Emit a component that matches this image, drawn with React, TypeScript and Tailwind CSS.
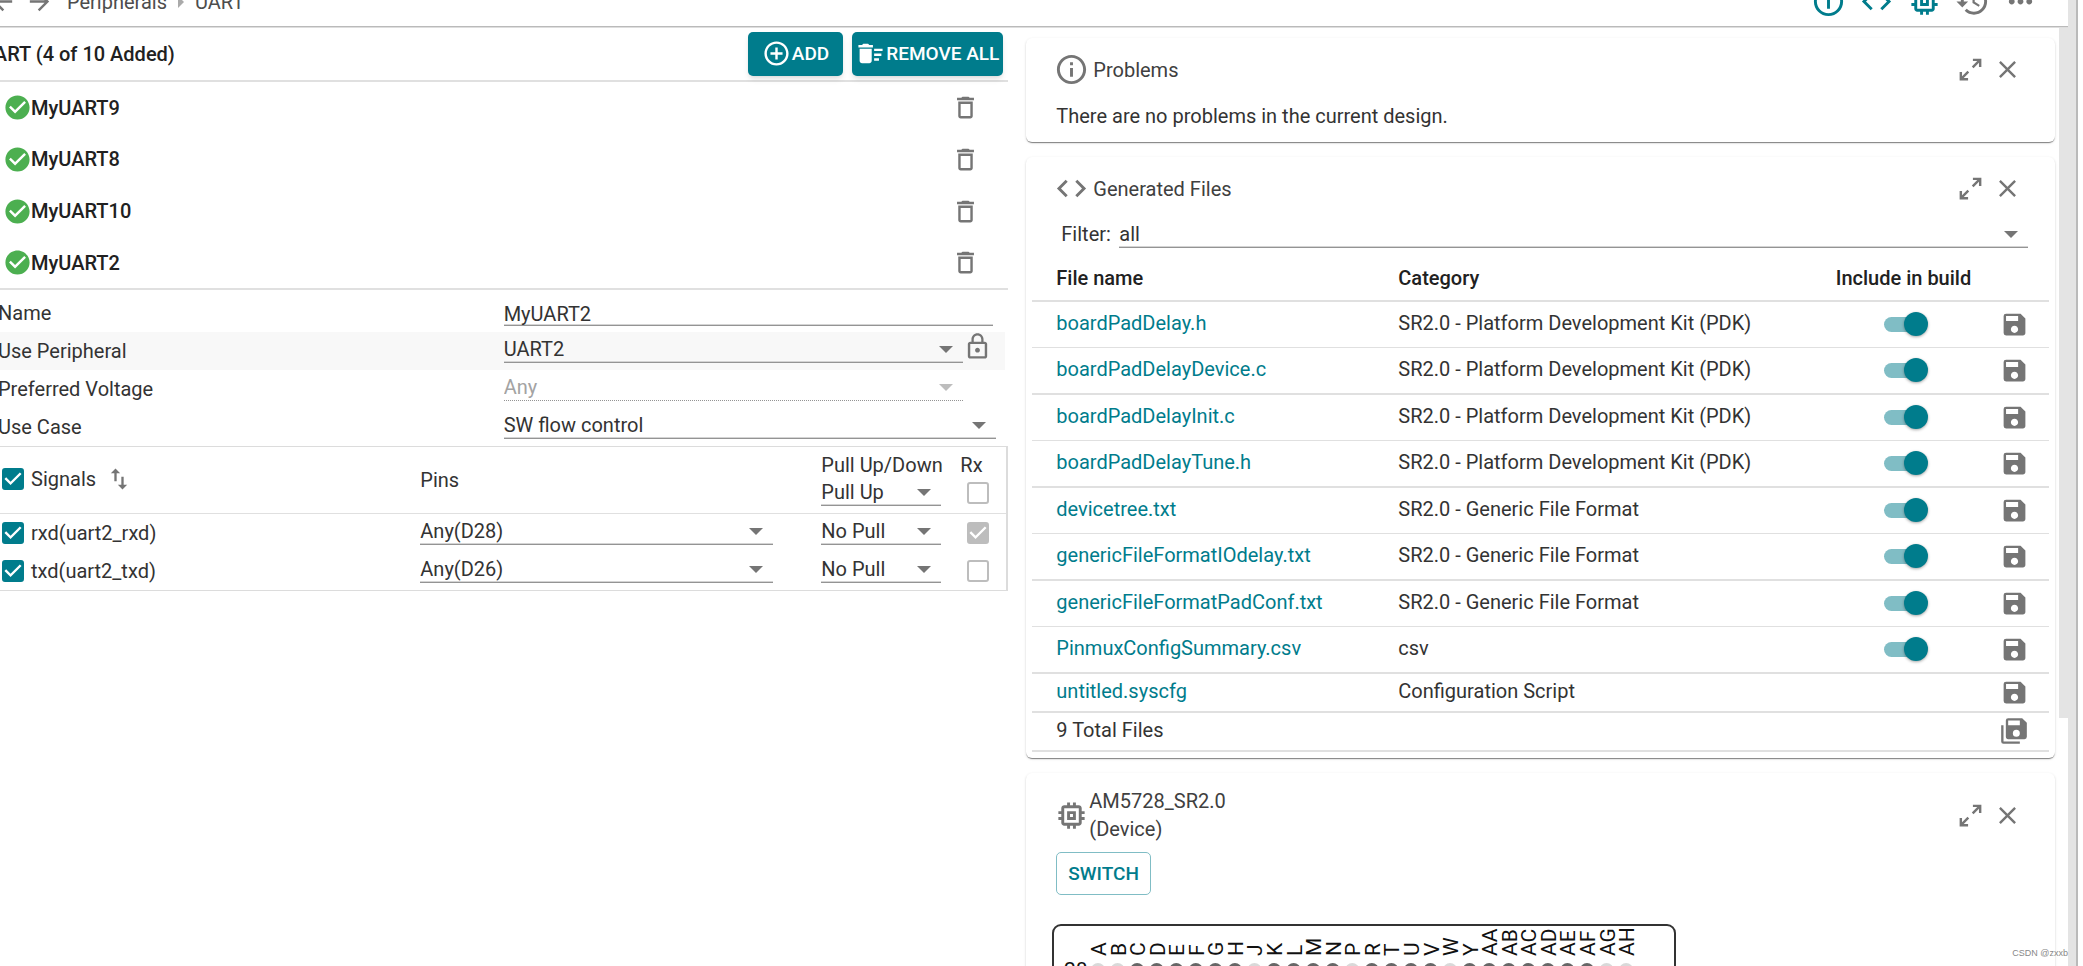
import { useState } from 'react';
import type { ReactNode } from 'react';
import {
    MdAddCircleOutline, MdArrowBack, MdArrowForward, MdCheckCircle, MdClose, MdCode, MdDeleteOutline,
    MdDeleteSweep, MdHistory, MdImportExport, MdInfoOutline, MdLockOutline, MdMemory, MdMoreHoriz, MdSave,
} from 'react-icons/md';

type GeneratedFile = { name: string; category: string; toggle: boolean };
type Signal = { name: string; pin: string; pull: string; rx: boolean };

const instances = ['MyUART9', 'MyUART8', 'MyUART10', 'MyUART2'];

const signals: Signal[] = [
    { name: 'rxd(uart2_rxd)', pin: 'Any(D28)', pull: 'No Pull', rx: true },
    { name: 'txd(uart2_txd)', pin: 'Any(D26)', pull: 'No Pull', rx: false },
];

const PDK = 'SR2.0 - Platform Development Kit (PDK)';
const GENERIC = 'SR2.0 - Generic File Format';

const files: GeneratedFile[] = [
    { name: 'boardPadDelay.h', category: PDK, toggle: true },
    { name: 'boardPadDelayDevice.c', category: PDK, toggle: true },
    { name: 'boardPadDelayInit.c', category: PDK, toggle: true },
    { name: 'boardPadDelayTune.h', category: PDK, toggle: true },
    { name: 'devicetree.txt', category: GENERIC, toggle: true },
    { name: 'genericFileFormatIOdelay.txt', category: GENERIC, toggle: true },
    { name: 'genericFileFormatPadConf.txt', category: GENERIC, toggle: true },
    { name: 'PinmuxConfigSummary.csv', category: 'csv', toggle: true },
    { name: 'untitled.syscfg', category: 'Configuration Script', toggle: false },
];

const ballColumns = [
    'A', 'B', 'C', 'D', 'E', 'F', 'G', 'H', 'J', 'K', 'L', 'M', 'N', 'P', 'R', 'T', 'U', 'V', 'W', 'Y',
    'AA', 'AB', 'AC', 'AD', 'AE', 'AF', 'AG', 'AH',
];
const powerBalls = ['A', 'B', 'J', 'P', 'W', 'AG', 'AH'];

export default function App() {
    return (
        <div className="flex h-screen overflow-hidden bg-white font-[Roboto,'Liberation_Sans',sans-serif] text-xl leading-7 text-[#333]">
            <div className="flex min-w-0 flex-1 flex-col">
                <TopBar />
                <div className="flex min-h-0 flex-1">
                    <main className="w-[49%] shrink-0 overflow-hidden pr-[5px]">
                        <InstanceList />
                        <InstanceForm />
                        <SignalTable />
                    </main>
                    <aside className="flex min-w-0 flex-1 flex-col gap-[15px] overflow-hidden pt-[11px] pr-1 pl-[13px]">
                        <Card icon={<MdInfoOutline size={35} />} title="Problems">
                            <p className="px-[30px] pt-[15px] pb-3">There are no problems in the current design.</p>
                        </Card>
                        <GeneratedFiles />
                        <DeviceCard />
                    </aside>
                    <div className="w-[9px] shrink-0">
                        <div className="h-[691px] bg-[#e4e4e4]" />
                    </div>
                </div>
            </div>
            <div className="mr-[5px] w-[10px] shrink-0 border-r-2 border-[#bababa] bg-[#e4e4e4]" />
            <span className="absolute right-[15px] bottom-[5px] font-['Liberation_Sans',sans-serif] text-[9px] leading-4 text-[#888]">CSDN @zxxb</span>
        </div>
    );
}

function TopBar() {
    return (
        <header className="z-10 -mt-[23px] flex h-[50px] shrink-0 items-center border-b border-[#bababa] pr-6 text-[#757575] shadow-[0_1px_0_#dedede]">
            <button type="button" aria-label="Back" className="-ml-3"><MdArrowBack size={29} /></button>
            <button type="button" aria-label="Forward" className="ml-2"><MdArrowForward size={29} /></button>
            <nav className="ml-[13px] flex flex-1 items-center text-[#4d4d4d]">
                <a href="#peripherals">Peripherals</a>
                <svg width="6" height="12" viewBox="0 0 6 12" className="mx-[11px] fill-[#aaa]"><path d="M0 0l6 6-6 6z" /></svg>
                <a href="#uart">UART</a>
            </nav>
            <BarButton label="Problems" active><MdInfoOutline size={35} /></BarButton>
            <BarButton label="Generated files" active><MdCode size={35} /></BarButton>
            <BarButton label="Device" active><MdMemory size={35} /></BarButton>
            <BarButton label="History"><MdHistory size={35} /></BarButton>
            <BarButton label="More"><MdMoreHoriz size={35} /></BarButton>
        </header>
    );
}

function BarButton({ label, active, children }: { label: string; active?: boolean; children: ReactNode }) {
    return (
        <button type="button" aria-label={label} className={'flex w-12 justify-center ' + (active ? 'text-[#007c8c]' : 'text-[#757575]')}>
            {children}
        </button>
    );
}

function InstanceList() {
    return (
        <section className="text-[#212121]">
            <div className="flex h-[55px] items-center justify-end gap-[9px] border-b-2 border-[#e0e0e0] pr-[5px]">
                <h1 className="-ml-[19px] flex-1 font-medium">UART (4 of 10 Added)</h1>
                <button type="button" className="flex h-11 items-center rounded-[5px] bg-[#007c8c] px-[14px] text-[19px] font-medium text-white shadow-md">
                    <MdAddCircleOutline size={29} className="mr-px" />ADD
                </button>
                <button type="button" className="flex h-11 items-center rounded-[5px] bg-[#007c8c] px-1 text-[19px] font-medium text-white shadow-md">
                    <MdDeleteSweep size={29} className="mr-px" />REMOVE ALL
                </button>
            </div>
            <ul className="border-b-2 border-[#e0e0e0]">
                {instances.map((name) => (
                    <li key={name} className="flex h-[52px] items-center pr-7 pl-[3px] font-medium first:h-[51px] last:h-[51px]">
                        <MdCheckCircle size={29} className="-mr-px text-[#4caf50]" />
                        <span className="flex-1">{name}</span>
                        <button type="button" aria-label={'Delete ' + name} className="text-[#757575]"><MdDeleteOutline size={29} /></button>
                    </li>
                ))}
            </ul>
        </section>
    );
}

function InstanceForm() {
    const [name, setName] = useState('MyUART2');

    return (
        <form className="pt-1">
            <FormRow id="name" label="Name">
                <input id="name" value={name} onChange={(e) => setName(e.target.value)}
                    className="mr-[15px] h-[28px] min-w-0 flex-1 border-b border-[#949494] pt-1 shadow-[inset_0_-1px_0_#d4d4d4] outline-none" />
            </FormRow>
            <FormRow id="peripheral" label="Use Peripheral" shaded>
                <Select id="peripheral" options={['UART2', 'Any']} className="flex-1" />
                <button type="button" aria-label="Lock" className="-mt-1 mr-4 h-[29px] text-[#757575]"><MdLockOutline size={29} /></button>
            </FormRow>
            <FormRow id="voltage" label="Preferred Voltage">
                <Select id="voltage" options={['Any']} className="mr-[45px] flex-1" disabled />
            </FormRow>
            <FormRow id="usecase" label="Use Case">
                <Select id="usecase" options={['SW flow control']} className="mr-3 flex-1" />
            </FormRow>
        </form>
    );
}

function FormRow({ id, label, shaded, children }: { id: string; label: string; shaded?: boolean; children: ReactNode }) {
    return (
        <div className={'mr-[3px] flex h-[38px] items-center ' + (shaded ? 'bg-[#f8f8f8]' : '')}>
            <label htmlFor={id} className="-ml-0.5 w-1/2 shrink-0">{label}</label>
            <div className="mt-1 -mr-[3px] ml-[3px] flex min-w-0 flex-1 self-start">{children}</div>
        </div>
    );
}

function Select({ id, label, options, disabled, className = '' }: { id?: string; label?: string; options: string[]; disabled?: boolean; className?: string }) {
    return (
        <div className={'relative min-w-0 ' + className}>
            <select id={id} aria-label={label} disabled={disabled}
                className="block h-[27px] w-full appearance-none border-b border-[#949494] pr-8 leading-[26px] shadow-[inset_0_-1px_0_#d4d4d4] outline-none disabled:border-dotted disabled:text-[#a3a3a3] disabled:opacity-100 disabled:shadow-none">
                {options.map((o) => <option key={o}>{o}</option>)}
            </select>
            <svg width="14" height="7" viewBox="0 0 14 7" className={'pointer-events-none absolute top-[10px] right-[10px] ' + (disabled ? 'fill-[#bdbdbd]' : 'fill-[#757575]')}>
                <path d="M0 0h14L7 7z" />
            </svg>
        </div>
    );
}

function Checkbox({ label, checked = false, muted }: { label: string; checked?: boolean; muted?: boolean }) {
    return (
        <span className="inline-grid align-middle">
            <input type="checkbox" aria-label={label} defaultChecked={checked}
                className={'peer size-[22px] appearance-none rounded-[3px] border-2 border-[#bdbdbd] [grid-area:1/1] '
                    + (muted ? 'checked:bg-[#bdbdbd]' : 'checked:border-[#007c8c] checked:bg-[#007c8c]')} />
            <svg viewBox="3 3 18 18" className="pointer-events-none invisible size-[22px] fill-white [grid-area:1/1] peer-checked:visible">
                <path d="M10 17l-5-5 1.41-1.41L10 14.17l7.59-7.59L19 8z" />
            </svg>
        </span>
    );
}

function SignalTable() {
    return (
        <table className="w-full table-fixed border-separate border-spacing-0 border-t border-r-2 border-[#dcdcdc] text-left">
            <colgroup>
                <col />
                <col className="w-[401px]" />
                <col className="w-[139px]" />
                <col className="w-[46px]" />
            </colgroup>
            <thead>
                <tr>
                    <th className="h-[67px] border-b border-[#e0e0e0] p-0 pb-0.5 pl-0.5 font-normal">
                        <div className="flex items-center">
                            <Checkbox label="All signals" checked />
                            <span className="ml-[7px]">Signals</span>
                            <button type="button" aria-label="Sort" className="ml-[9px] text-[#757575]"><MdImportExport size={28} /></button>
                        </div>
                    </th>
                    <th className="border-b border-[#e0e0e0] p-0 font-normal">Pins</th>
                    <th className="border-b border-[#e0e0e0] p-0 align-top font-normal">
                        <div className="pt-1">Pull Up/Down</div>
                        <Select label="Pull all" options={['Pull Up', 'No Pull']} className="w-[120px]" />
                    </th>
                    <th className="border-b border-[#e0e0e0] p-0 align-top font-normal">
                        <div className="pt-1">Rx</div>
                        <div className="mt-[3px] flex pl-[7px]"><Checkbox label="Rx all" muted /></div>
                    </th>
                </tr>
            </thead>
            <tbody>
                {signals.map((s) => (
                    <tr key={s.name} className="*:h-[38px] last:*:h-[39px] last:*:border-b last:*:border-[#dcdcdc]">
                        <td className="p-0 pb-px pl-0.5">
                            <div className="flex items-center"><Checkbox label={s.name} checked /><span className="ml-[7px]">{s.name}</span></div>
                        </td>
                        <td className="p-0 pb-[3px]"><Select label={'Pin for ' + s.name} options={[s.pin]} className="mr-12" /></td>
                        <td className="p-0 pb-[3px]"><Select label={'Pull for ' + s.name} options={[s.pull]} className="w-[120px]" /></td>
                        <td className="p-0 pb-px pl-[7px]"><div className="flex"><Checkbox label={'Rx for ' + s.name} checked={s.rx} muted /></div></td>
                    </tr>
                ))}
            </tbody>
        </table>
    );
}

function Card({ icon, title, children }: { icon: ReactNode; title: ReactNode; children: ReactNode }) {
    return (
        <section className="shrink-0 rounded-md bg-white shadow-[0_2px_1px_-1px_rgba(0,0,0,0.3),0_1px_1px_rgba(0,0,0,0.2),0_1px_3px_rgba(0,0,0,0.12)]">
            <div className="flex items-center pt-[14px] pr-[33px] pl-7 text-[#757575]">
                {icon}
                <h2 className="ml-1 flex-1 text-[#404040]">{title}</h2>
                <button type="button" aria-label="Expand" className="mr-2">
                    <svg width="29" height="29" viewBox="0 0 24 24" fill="currentColor">
                        <path d="M10 21v-2H6.41l4.5-4.5-1.41-1.41-4.5 4.5V14H3v7h7zM14.5 10.91l4.5-4.5V10h2V3h-7v2h3.59l-4.5 4.5 1.41 1.41z" />
                    </svg>
                </button>
                <button type="button" aria-label="Close"><MdClose size={29} /></button>
            </div>
            {children}
        </section>
    );
}

function GeneratedFiles() {
    return (
        <Card icon={<MdCode size={35} />} title="Generated Files">
            <div className="mt-[14px] flex items-center pr-[27px] pl-[35px]">
                <label htmlFor="filter" className="w-[58px] shrink-0">Filter:</label>
                <Select id="filter" options={['all']} className="flex-1" />
            </div>
            <div className="px-[6px] pt-[5px] pb-[6px]">
                <table className="w-full table-fixed border-separate border-spacing-0 text-left">
                    <colgroup>
                        <col className="w-[36%]" />
                        <col />
                        <col className="w-[146px]" />
                        <col className="w-[70px]" />
                    </colgroup>
                    <thead>
                        <tr className="text-[#212121] *:h-[49px] *:border-b-2 *:border-[#e0e0e0] *:font-medium">
                            <th className="p-0 pt-0.5"><span className="pl-6">File name</span></th>
                            <th className="p-0 pt-0.5">Category</th>
                            <th className="p-0 pt-0.5 pr-[5px] text-center whitespace-nowrap">Include in build</th>
                            <th className="p-0" />
                        </tr>
                    </thead>
                    <tbody>
                        {files.map((f) => (
                            <tr key={f.name} className={'*:border-[#e0e0e0] ' + (f.toggle ? 'odd:*:h-[46px] odd:*:border-b even:*:h-[47px] even:*:border-b-2' : '*:h-[39px] *:border-b-2')}>
                                <td className="p-0 pb-[3px]"><a href={'#' + f.name} className="pl-6 text-[#007c8c]">{f.name}</a></td>
                                <td className="p-0 pb-[3px]">{f.category}</td>
                                <td className="p-0 pb-px">{f.toggle && <Toggle label={'Include ' + f.name} />}</td>
                                <td className="p-0 pb-px">
                                    <button type="button" aria-label={'Save ' + f.name} className="mx-auto block text-[#757575]"><MdSave size={29} /></button>
                                </td>
                            </tr>
                        ))}
                    </tbody>
                    <tfoot>
                        <tr className="*:h-[39px] *:border-b-2 *:border-[#e0e0e0]">
                            <td colSpan={3} className="p-0 pb-[3px]"><span className="pl-6">{files.length} Total Files</span></td>
                            <td className="p-0 pb-px">
                                <button type="button" aria-label="Save all" className="mx-auto block text-[#757575]">
                                    <svg width="28" height="28" viewBox="0 0 24 24" fill="currentColor">
                                        <path d="M17 7V3H7v4h10m-3 10a3 3 0 0 0 3-3 3 3 0 0 0-3-3 3 3 0 0 0-3 3 3 3 0 0 0 3 3m5-16l4 4v12a2 2 0 0 1-2 2H7c-1.11 0-2-.9-2-2V3a2 2 0 0 1 2-2h12M1 7h2v14h14v2H3a2 2 0 0 1-2-2V7z" />
                                    </svg>
                                </button>
                            </td>
                        </tr>
                    </tfoot>
                </table>
            </div>
        </Card>
    );
}

function Toggle({ label }: { label: string }) {
    return (
        <input type="checkbox" role="switch" aria-label={label} defaultChecked
            className="relative mx-auto block h-6 w-11 appearance-none before:absolute before:top-[5px] before:left-0 before:h-[15px] before:w-[38px] before:rounded-full before:bg-[#bdbdbd] after:absolute after:top-0 after:left-0 after:size-6 after:rounded-full after:bg-[#f5f5f5] after:shadow-[0_1px_3px_rgba(0,0,0,0.35)] checked:before:bg-[#80bdc5] checked:after:left-5 checked:after:bg-[#007c8c]" />
    );
}

function DeviceCard() {
    return (
        <Card icon={<MdMemory size={35} />} title={<span className="-ml-1 block w-[140px]">AM5728_SR2.0 (Device)</span>}>
            <div className="px-[30px] pt-[9px]">
                <button type="button" className="h-[43px] rounded-[5px] border border-[#80bdc5] px-[11px] text-[19px] font-medium text-[#007c8c]">SWITCH</button>
            </div>
            <PackageView />
        </Card>
    );
}

/* Top view of the BGA package, one circle per ball */
function PackageView() {
    const pitch = 19.56;

    return (
        <svg width="624" height="624" viewBox="0 0 624 624" className="mt-[29px] ml-[26px] block">
            <rect x="1" y="1" width="622" height="622" rx="8" fill="none" stroke="#333" strokeWidth="2" />
            <text x="12" y="53" fontSize="21" fill="#111">28</text>
            {ballColumns.map((col, i) => (
                <g key={col} transform={`translate(${46 + i * pitch} 0)`}>
                    <text transform="translate(8 32) rotate(-90)" fontSize="21" fill="#111">{col}</text>
                    <circle cx="0" cy="46" r="7" fill={powerBalls.includes(col) ? '#d9d9d9' : '#666'} />
                </g>
            ))}
        </svg>
    );
}
